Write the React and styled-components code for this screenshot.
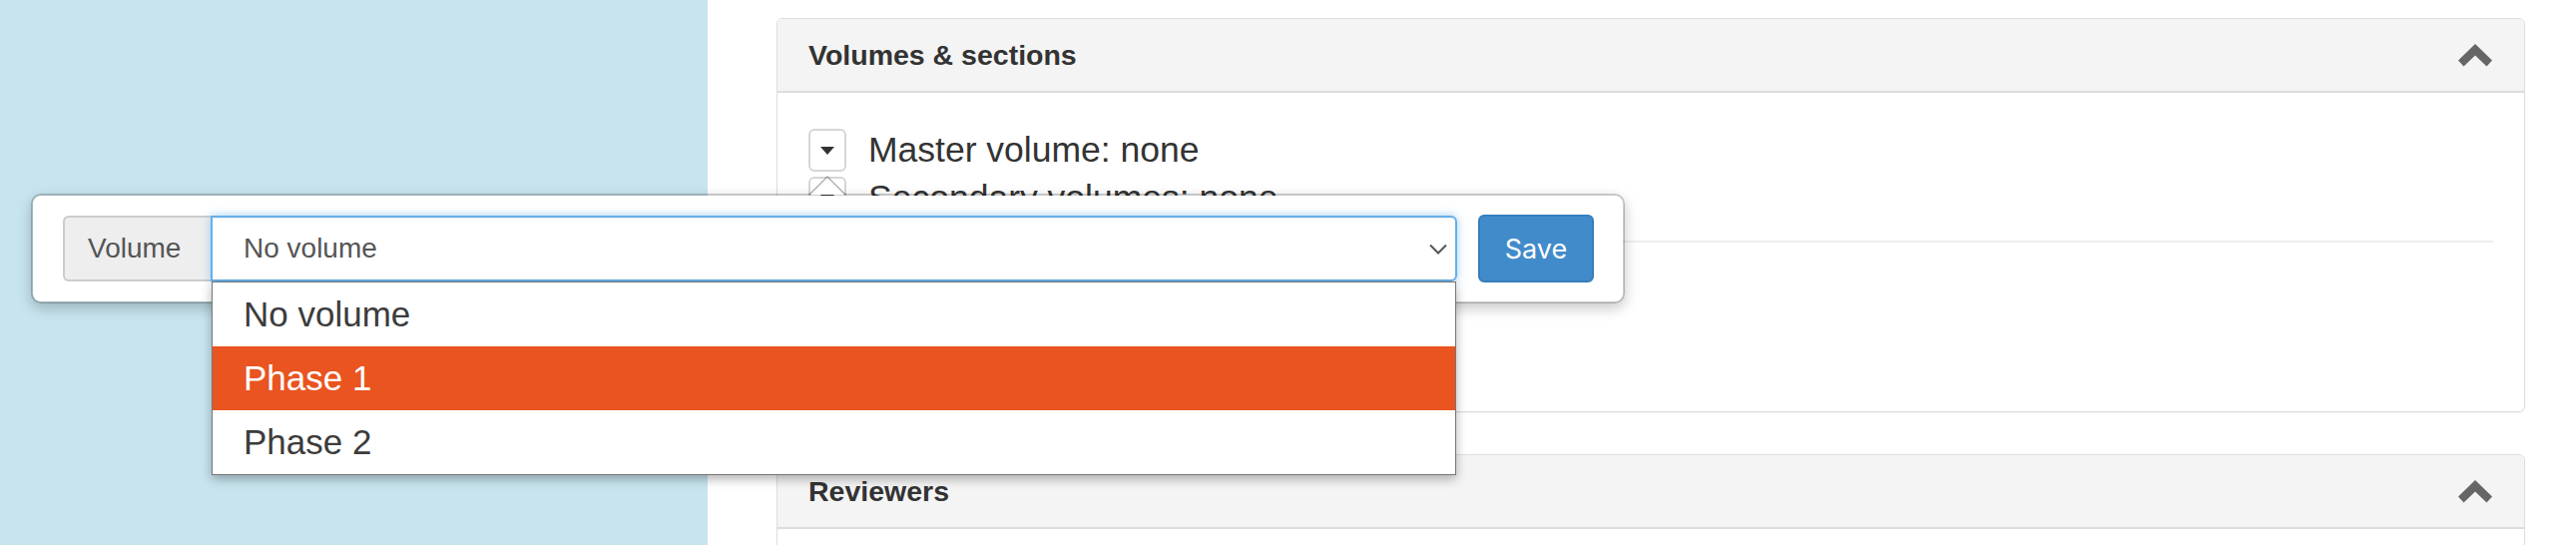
import React from "react";
import styled, { createGlobalStyle } from "styled-components";

const GlobalStyle = createGlobalStyle`
  * { box-sizing: border-box; }
  html, body { margin: 0; padding: 0; background: #fff; }
  body { font-family: "Liberation Sans", Arial, sans-serif; color: #333; }
`;

const Page = styled.div`
  position: relative;
  display: flex;
  height: 546px;
  overflow: hidden;
`;

const Sidebar = styled.aside`
  width: 709px;
  flex: none;
  background: #c8e5ef;
`;

const Main = styled.main`
  flex: 1;
  padding: 18px 51px 0 69px;
`;

const Panel = styled.section`
  border: 1px solid #ddd;
  border-radius: 6px;
  background: #fff;
  margin-bottom: 42px;
  box-shadow: 0 1px 1px rgba(0, 0, 0, 0.05);
`;

const PanelHeader = styled.header`
  height: 74px;
  display: flex;
  align-items: center;
  justify-content: space-between;
  padding: 0 32px 0 31px;
  background: #f4f4f4;
  border-bottom: 2px solid #ddd;
  border-radius: 5px 5px 0 0;
`;

const PanelTitle = styled.h3`
  margin: 0;
  font-size: 28.5px;
  font-weight: bold;
  color: #333;
`;

const PanelBody = styled.div`
  padding: 36px 31px 36px;
`;

const VolumeLine = styled.div`
  display: flex;
  align-items: center;
  gap: 22px;
  height: 43px;
  margin-bottom: ${(p) => (p.$last ? "0" : "5px")};
`;

const CaretButton = styled.button`
  width: 38px;
  height: 43px;
  flex: none;
  display: flex;
  align-items: center;
  justify-content: center;
  padding: 0;
  background: #fff;
  border: 2px solid #d6d6d6;
  border-radius: 6px;
`;

const VolumeText = styled.span`
  font-size: 35.5px;
  color: #333;
  line-height: 1;
`;

const Divider = styled.hr`
  margin: 21px 0 0;
  border: 0;
  border-top: 2px solid #eee;
`;

const SectionList = styled.div`
  min-height: 133px;
`;

const Popover = styled.div`
  position: absolute;
  left: 31px;
  top: 194px;
  width: 1597px;
  height: 110px;
  display: flex;
  align-items: center;
  gap: 21px;
  padding: 0 29px 0 30px;
  background: #fff;
  border: 2px solid rgba(0, 0, 0, 0.2);
  border-radius: 10px;
  box-shadow: 0 5px 14px rgba(0, 0, 0, 0.22);
  background-clip: padding-box;
  z-index: 10;
`;

const Arrow = styled.span`
  position: absolute;
  left: 777px;
  top: -20px;
  width: 0;
  height: 0;
  border-left: 19px solid transparent;
  border-right: 19px solid transparent;
  border-bottom: 19px solid rgba(0, 0, 0, 0.3);
  &::after {
    content: "";
    position: absolute;
    left: -17px;
    top: 2px;
    border-left: 17px solid transparent;
    border-right: 17px solid transparent;
    border-bottom: 17px solid #fff;
  }
`;

const InputGroup = styled.div`
  flex: 1;
  display: flex;
  height: 66px;
`;

const Addon = styled.span`
  display: flex;
  align-items: center;
  padding: 0 23px;
  width: 148px;
  background: #eee;
  border: 2px solid #ccc;
  border-right: 0;
  border-radius: 6px 0 0 6px;
  font-size: 28px;
  color: #555;
`;

const SelectBox = styled.div`
  position: relative;
  flex: 1;
  display: flex;
  align-items: center;
  padding: 0 8px 0 31px;
  border: 2px solid #66afe9;
  border-radius: 0 6px 6px 0;
  box-shadow: inset 0 1px 1px rgba(0, 0, 0, 0.075), 0 0 10px rgba(102, 175, 233, 0.6);
  font-size: 28px;
  color: #555;
`;

const SelectValue = styled.span`
  flex: 1;
`;

const OptionList = styled.ul`
  position: absolute;
  left: -1px;
  right: -1px;
  top: calc(100% + 2px);
  margin: 0;
  padding: 0;
  list-style: none;
  background: #fff;
  border: 1px solid #767676;
  box-shadow: 0 4px 10px rgba(0, 0, 0, 0.3);
`;

const Option = styled.li`
  height: 64px;
  display: flex;
  align-items: center;
  padding-left: 31px;
  font-size: 35px;
  color: ${(p) => (p.$selected ? "#fff" : "#3c3c3c")};
  background: ${(p) => (p.$selected ? "#e95420" : "#fff")};
`;

const SaveButton = styled.button`
  width: 116px;
  height: 68px;
  flex: none;
  background: #428bca;
  border: 2px solid #357ebd;
  border-radius: 6px;
  color: #fff;
  font-family: Inter, "Liberation Sans", sans-serif;
  font-size: 27px;
  padding: 0;
`;

const ChevronUp = () => (
  <svg width="34" height="23" viewBox="0 0 34 23">
    <path d="M17 0 L34 16.5 L28.5 22.5 L17 11.5 L5.5 22.5 L0 16.5 Z" fill="#666" />
  </svg>
);

const Caret = () => (
  <svg width="14" height="8" viewBox="0 0 14 8">
    <path d="M0 0 L14 0 L7 8 Z" fill="#333" />
  </svg>
);

const SelectChevron = () => (
  <svg width="18" height="11" viewBox="0 0 18 11">
    <polyline points="1,1.5 9,9.5 17,1.5" fill="none" stroke="#555" strokeWidth="2" />
  </svg>
);

const options = ["No volume", "Phase 1", "Phase 2"];

export default function App() {
  return (
    <>
      <GlobalStyle />
      <Page>
        <Sidebar />
        <Main>
          <Panel>
            <PanelHeader>
              <PanelTitle>Volumes &amp; sections</PanelTitle>
              <ChevronUp />
            </PanelHeader>
            <PanelBody>
              <VolumeLine>
                <CaretButton>
                  <Caret />
                </CaretButton>
                <VolumeText>Master volume: none</VolumeText>
              </VolumeLine>
              <VolumeLine $last>
                <CaretButton>
                  <Caret />
                </CaretButton>
                <VolumeText>Secondary volumes: none</VolumeText>
              </VolumeLine>
              <Divider />
              <SectionList />
            </PanelBody>
          </Panel>
          <Panel>
            <PanelHeader>
              <PanelTitle>Reviewers</PanelTitle>
              <ChevronUp />
            </PanelHeader>
            <PanelBody />
          </Panel>
        </Main>
        <Popover>
          <Arrow />
          <InputGroup>
            <Addon>Volume</Addon>
            <SelectBox>
              <SelectValue>No volume</SelectValue>
              <SelectChevron />
              <OptionList>
                {options.map((o) => (
                  <Option key={o} $selected={o === "Phase 1"}>
                    {o}
                  </Option>
                ))}
              </OptionList>
            </SelectBox>
          </InputGroup>
          <SaveButton>Save</SaveButton>
        </Popover>
      </Page>
    </>
  );
}
